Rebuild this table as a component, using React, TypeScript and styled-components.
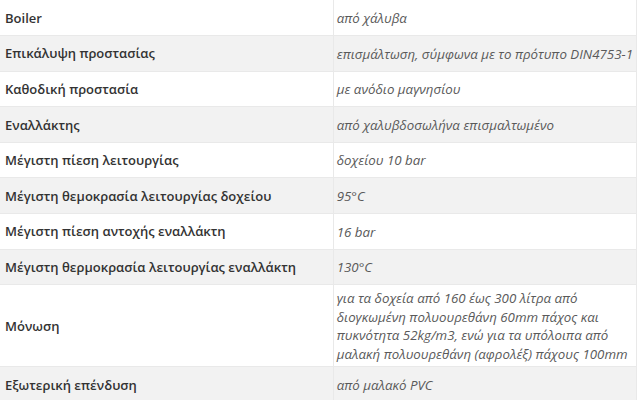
import styled, { createGlobalStyle } from "styled-components";

const GlobalStyle = createGlobalStyle`
  html, body {
    margin: 0;
    padding: 0;
    background: #ffffff;
  }
`;

type Spec = { label: string; value: string[] };

const specs: Spec[] = [
  { label: "Boiler", value: ["από χάλυβα"] },
  {
    label: "Επικάλυψη προστασίας",
    value: ["επισμάλτωση, σύμφωνα με το πρότυπο DIN4753-1"],
  },
  { label: "Καθοδική προστασία", value: ["με ανόδιο μαγνησίου"] },
  { label: "Εναλλάκτης", value: ["από χαλυβδοσωλήνα επισμαλτωμένο"] },
  { label: "Μέγιστη πίεση λειτουργίας", value: ["δοχείου 10 bar"] },
  { label: "Μέγιστη θεμοκρασία λειτουργίας δοχείου", value: ["95°C"] },
  { label: "Μέγιστη πίεση αντοχής εναλλάκτη", value: ["16 bar"] },
  { label: "Μέγιστη θερμοκρασία λειτουργίας εναλλάκτη", value: ["130°C"] },
  {
    label: "Μόνωση",
    value: [
      "για τα δοχεία από 160 έως 300 λίτρα από",
      "διογκωμένη πολυουρεθάνη 60mm πάχος και",
      "πυκνότητα 52kg/m3, ενώ για τα υπόλοιπα από",
      "μαλακή πολυουρεθάνη (αφρολέξ) πάχους 100mm",
    ],
  },
  { label: "Εξωτερική επένδυση", value: ["από μαλακό PVC"] },
];

function App() {
  return (
    <>
      <GlobalStyle />
      <S.Page>
        <S.Table>
          <tbody>
            {specs.map((s, i) => (
              <S.Row key={s.label} $striped={i % 2 === 1}>
                <S.Label>{s.label}</S.Label>
                <S.Value>
                  {s.value.map((line, j) => (
                    <span key={j}>
                      {j > 0 && <br />}
                      {line}
                    </span>
                  ))}
                </S.Value>
              </S.Row>
            ))}
          </tbody>
        </S.Table>
      </S.Page>
    </>
  );
}

const S = {
  Page: styled.div`
    width: 640px;
    height: 400px;
    overflow: hidden;
    background: #ffffff;
  `,
  Table: styled.table`
    width: 637px;
    border-collapse: collapse;
    font-family: "Open Sans", "Noto Sans", sans-serif;
  `,
  Row: styled.tr<{ $striped: boolean }>`
    height: 35.6px;
    background: ${(p) => (p.$striped ? "#f2f2f2" : "#ffffff")};
    border-bottom: 1px solid #e9e9e9;
  `,
  Label: styled.td`
    width: 324px;
    padding: 0 5px;
    font-size: 13px;
    line-height: 18px;
    font-weight: 600;
    color: #333333;
    vertical-align: middle;
    border-right: 1px solid #e9e9e9;
  `,
  Value: styled.td`
    padding: 4px 3px 3px 3px;
    font-size: 13.3px;
    line-height: 18.5px;
    font-style: italic;
    color: #5a5a5a;
    white-space: nowrap;
    vertical-align: middle;
    border-right: 1px solid #e9e9e9;
  `,
};

export default App;
